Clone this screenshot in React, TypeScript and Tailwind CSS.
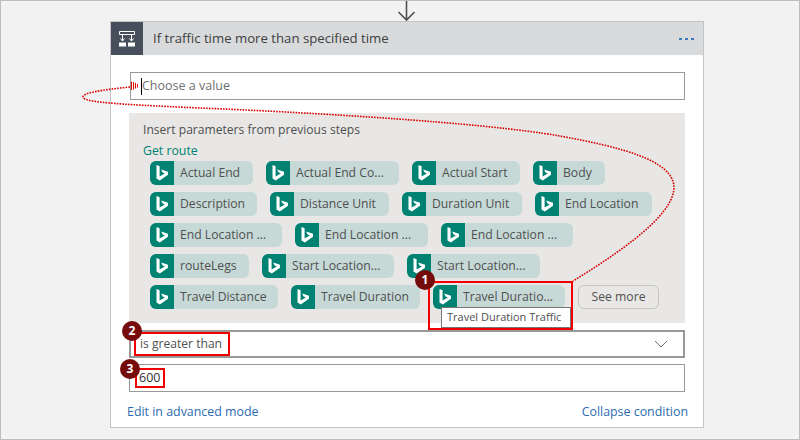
const chipRows: { label: string; w: string }[][] = [
  [
    { label: "Actual End", w: "w-[103px]" },
    { label: "Actual End Co...", w: "w-[133px]" },
    { label: "Actual Start", w: "w-[108px]" },
    { label: "Body", w: "w-[72px]" },
  ],
  [
    { label: "Description", w: "w-[107px]" },
    { label: "Distance Unit", w: "w-[119px]" },
    { label: "Duration Unit", w: "w-[120px]" },
    { label: "End Location", w: "w-[117px]" },
  ],
  [
    { label: "End Location ...", w: "w-[132px]" },
    { label: "End Location ...", w: "w-[133px]" },
    { label: "End Location ...", w: "w-[132px]" },
  ],
  [
    { label: "routeLegs", w: "w-[99px]" },
    { label: "Start Location...", w: "w-[132px]" },
    { label: "Start Location...", w: "w-[133px]" },
  ],
  [
    { label: "Travel Distance", w: "w-[128px]" },
    { label: "Travel Duration", w: "w-[129px]" },
    { label: "Travel Duratio...", w: "w-[132px]" },
  ],
];

function BingIcon() {
  return (
    <span className="flex h-6 w-6 shrink-0 items-center justify-center rounded-l-[6px] bg-[#008272]">
      <svg width="14" height="18" viewBox="0 0 14 18">
        <path d="M1.5 1 L4.6 2.2 V12.4 L9.8 9.4 L7.4 8.2 L6.2 5.6 L13 7.8 V10.8 L4.8 16.5 L1.5 14.6 Z" fill="#fff" />
      </svg>
    </span>
  );
}

function Chip({ label, w }: { label: string; w: string }) {
  return (
    <div className={`flex h-6 items-center rounded-[6px] bg-[#c6d9d7] ${w}`}>
      <BingIcon />
      <span className="ml-[6px] whitespace-nowrap text-[12.2px] text-[#505050]">{label}</span>
    </div>
  );
}

function Badge({ n, className }: { n: number; className: string }) {
  return (
    <div
      className={`absolute flex h-5 w-5 items-center justify-center rounded-full bg-[#750b0b] text-[12px] font-bold text-white ${className}`}
    >
      {n}
    </div>
  );
}

export default function App() {
  return (
    <div className="relative h-[440px] w-[800px] overflow-hidden border border-[#bdbdbd] bg-[#f2f2f2] font-['Open_Sans','Noto_Sans',sans-serif]">
      <svg className="absolute left-[395px] top-[-1px]" width="22" height="22" viewBox="0 0 22 22">
        <path d="M10.5 1 V20 M2.5 12 L10.5 20 L18.5 12" fill="none" stroke="#505050" strokeWidth="1.6" />
      </svg>

      <div className="ml-[109px] mt-[20px] h-[407px] w-[594px] border border-[#c4c4c4] bg-white">
        <div className="flex h-[33px] items-center bg-[#d8dadc]">
          <div className="flex h-[33px] w-8 items-center justify-center bg-[#474f5c]">
            <svg width="18" height="18" viewBox="0 0 18 18">
              <path d="M1.5 1.5 H16.5 V4.5 H1.5 Z M4.5 4.5 V11 M13.5 4.5 V11" fill="none" stroke="#fff" strokeWidth="1" />
              <path d="M2.5 8.5 L4.5 11 L6.5 8.5 M11.5 8.5 L13.5 11 L15.5 8.5" fill="none" stroke="#fff" strokeWidth="1" />
              <path d="M1 12.5 H8 V16.5 H1 Z M10 12.5 H17 V16.5 H10 Z" fill="#fff" />
            </svg>
          </div>
          <div className="ml-[10px] flex-1 text-[13.2px] text-[#404040]">If traffic time more than specified time</div>
          <div className="mr-[9px] flex gap-[3px]">
            <span className="h-[2px] w-[3px] bg-[#3f78bd]" />
            <span className="h-[2px] w-[3px] bg-[#3f78bd]" />
            <span className="h-[2px] w-[3px] bg-[#3f78bd]" />
          </div>
        </div>

        <div className="ml-[19px] mt-[17px] flex h-[28px] w-[555px] items-center border border-[#999] bg-white pl-[10px]">
          <span className="h-[17px] w-px bg-black" />
          <span className="text-[12.5px] text-[#707070]">Choose a value</span>
        </div>

        <div className="ml-[18px] mt-[13px] h-[210px] w-[556px] bg-[#e8e7e5] pt-[8px]">
          <div className="ml-[14px] text-[12.1px] leading-[17px] text-[#505050]">Insert parameters from previous steps</div>
          <div className="ml-[14px] mt-[4px] text-[12.3px] leading-[18px] text-[#008272]">Get route</div>
          <div className="ml-[21px] mt-[1px] flex flex-col gap-[7px]">
            {chipRows.map((row, i) => (
              <div key={i} className="flex gap-[13px]">
                {row.map((c, j) => (
                  <Chip key={j} label={c.label} w={c.w} />
                ))}
                {i === 4 && (
                  <div className="flex h-6 w-[81px] items-center justify-center rounded-[6px] border border-[#c4c4c4] text-[12.2px] text-[#505050]">
                    See more
                  </div>
                )}
              </div>
            ))}
          </div>
        </div>

        <div className="ml-[18px] mt-[7px] flex h-[28px] w-[556px] items-center justify-between border-2 border-[#999] bg-white pl-[9px] pr-[15px]">
          <span className="text-[12.1px] text-[#505050]">is greater than</span>
          <svg width="14" height="8" viewBox="0 0 14 8">
            <path d="M1 1 L7 7 L13 1" fill="none" stroke="#707070" strokeWidth="1" />
          </svg>
        </div>
        <div className="ml-[18px] mt-[6px] flex h-[28px] w-[556px] items-center border border-[#999] bg-white pl-[9px] text-[12.5px] text-[#333]">
          600
        </div>

        <div className="ml-[16px] mr-[15px] mt-[11px] flex justify-between text-[12.4px] text-[#2b6cb0]">
          <span>Edit in advanced mode</span>
          <span>Collapse condition</span>
        </div>
      </div>

      {/* Callout overlays, drawn in page coordinates */}
      <svg className="absolute left-[-1px] top-[-1px]" width="800" height="440" viewBox="0 0 800 440">
        <path
          d="M130 87 C100 90 83 93 83 97 C84 102 110 104 200 108 C300 112 480 122 560 136 C620 147 673 160 674 187 C674 210 640 240 573 281"
          fill="none"
          stroke="#d80000"
          strokeWidth="1.6"
          strokeDasharray="1.6 1.2"
        />
        <path
          d="M131.5 81.5 V90 M133.5 82 V89.5 M135.5 83 V88.5 M137.5 84 V87.5"
          fill="none"
          stroke="#e00000"
          strokeWidth="1"
        />
      </svg>

      <div className="absolute left-[427px] top-[280px] h-[49px] w-[145px] border-[2px] border-[#f00000]" />
      <div className="absolute left-[133px] top-[331px] h-[24px] w-[96px] border-[2px] border-[#f00000]" />
      <div className="absolute left-[134px] top-[367px] h-[20px] w-[30px] border-[2px] border-[#f00000]" />

      <div className="absolute left-[440px] top-[306px] h-[21px] w-[130px] whitespace-nowrap border border-[#767676] bg-white pl-[5px] text-[11px] leading-[18px] text-[#505050]">
        Travel Duration Traffic
      </div>

      <Badge n={1} className="left-[414px] top-[269px]" />
      <Badge n={2} className="left-[121px] top-[320px]" />
      <Badge n={3} className="left-[119px] top-[358px]" />
    </div>
  );
}
